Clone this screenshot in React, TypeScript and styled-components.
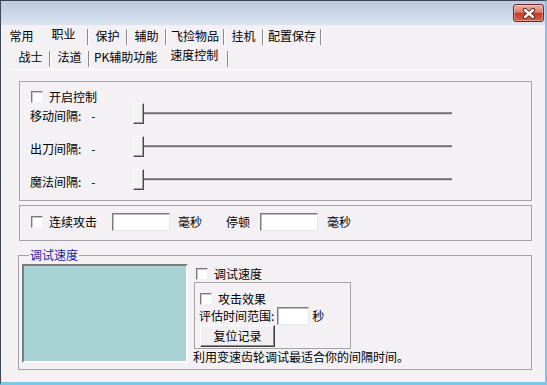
import * as React from 'react';
import styled, { createGlobalStyle } from 'styled-components';

const GlobalStyle = createGlobalStyle`
  html, body {
    margin: 0;
    padding: 0;
    background: #ffffff;
  }
  body {
    font-family: "Noto Sans CJK SC", "Noto Sans", sans-serif;
    font-size: 12px;
    line-height: 14px;
    color: #000;
  }
`;

const Window = styled.div`
  width: 547px;
  height: 385px;
  box-sizing: border-box;
  display: flex;
  flex-direction: column;
  border-top: 1px solid #3c4656;
  border-left: 1px solid #3c4656;
  border-right: 2px solid #7fc4ea;
  border-bottom: 3px solid #7fc4ea;
  background: #f4f1f5;
  overflow: hidden;
`;

const TitleBar = styled.div`
  height: 24px;
  flex-shrink: 0;
  display: flex;
  justify-content: flex-end;
  align-items: flex-start;
  padding: 3px 1px 0 0;
  box-sizing: border-box;
  background: linear-gradient(#bccbdf, #cfdbea 70%, #dbe4f0);
`;

const CloseButton = styled.div`
  width: 31px;
  height: 18px;
  box-sizing: border-box;
  border: 1px solid #6b2a22;
  border-radius: 3px;
  display: flex;
  align-items: center;
  justify-content: center;
  background: linear-gradient(#eab0a2 0%, #dc7e6a 45%, #c43c28 52%, #d2604c 100%);
  box-shadow: inset 0 0 0 1px rgba(255, 255, 255, 0.35);
`;

const Client = styled.div`
  flex: 1;
  display: flex;
  flex-direction: column;
  border-top: 1px solid #f0f0f4;
`;

const TabRow = styled.div<{ $indent: number; $h: number }>`
  display: flex;
  align-items: flex-end;
  height: ${(p) => p.$h}px;
  padding-left: ${(p) => p.$indent}px;
  flex-shrink: 0;
`;

const Tab = styled.div<{ $active?: boolean }>`
  height: 100%;
  box-sizing: border-box;
  display: flex;
  align-items: center;
  justify-content: center;
  white-space: nowrap;
  min-width: ${(p) => (p.$active ? 47 : 37)}px;
  padding: ${(p) => (p.$active ? '0 9px 4px' : '0 4px')};
`;

const TabSep = styled.div`
  width: 2px;
  height: 16px;
  box-sizing: border-box;
  border-left: 1px solid #8a8a8a;
  border-right: 1px solid #ffffff;
  margin-bottom: 1px;
  flex-shrink: 0;
`;

const Panel = styled.div`
  flex: 1;
  margin: 1px 32px 0 9px;
  border-top: 1px solid #ffffff;
  padding-top: 11px;
  display: flex;
  flex-direction: column;
`;

const Group = styled.div<{ $pt: number; $pb: number; $mt?: number }>`
  width: 513px;
  box-sizing: border-box;
  margin-left: 9px;
  margin-top: ${(p) => p.$mt || 0}px;
  border: 1px solid #a6a3a8;
  padding: ${(p) => p.$pt}px 0 ${(p) => p.$pb}px 0;
  display: flex;
  flex-direction: column;
`;

const CheckRow = styled.label<{ $ml?: number }>`
  display: flex;
  align-items: center;
  height: 13px;
  margin-left: ${(p) => p.$ml || 0}px;
  gap: 6px;
  white-space: nowrap;
`;

const CheckBox = styled.span`
  width: 12px;
  height: 12px;
  box-sizing: border-box;
  flex-shrink: 0;
  background: #ffffff;
  border-style: solid;
  border-width: 1px;
  border-color: #7a7a7a #f2f2f2 #f2f2f2 #7a7a7a;
  box-shadow: inset 1px 1px 0 #c8c8c8;
`;

const SliderRow = styled.div<{ $mt?: number }>`
  display: flex;
  align-items: center;
  height: 21px;
  margin-top: ${(p) => p.$mt || 0}px;
  padding-left: 10px;
`;

const SliderLabel = styled.div`
  width: 103px;
  display: flex;
  padding-top: 4px;
  white-space: nowrap;
`;

const Dash = styled.span`
  margin-left: 10px;
`;

const Slider = styled.div`
  display: flex;
  align-items: center;
  height: 21px;
`;

const Thumb = styled.div`
  width: 11px;
  height: 21px;
  box-sizing: border-box;
  background: #f4f3f4;
  border-style: solid;
  border-width: 1px;
  border-color: #ffffff #4a4a4a #4a4a4a #ffffff;
  box-shadow: inset -1px -1px 0 #a0a0a0;
`;

const Track = styled.div`
  width: 308px;
  height: 3px;
  box-sizing: border-box;
  background: #6c6c6c;
  border-top: 1px solid #8e8e8e;
  border-bottom: 1px solid #d8d8d8;
`;

const InlineRow = styled.div`
  display: flex;
  align-items: center;
  height: 18px;
  padding-left: 11px;
  white-space: nowrap;
`;

const Text = styled.span<{ $ml?: number }>`
  margin-left: ${(p) => p.$ml || 0}px;
  white-space: nowrap;
`;

const Input = styled.div<{ $w: number; $ml?: number }>`
  width: ${(p) => p.$w}px;
  height: 18px;
  box-sizing: border-box;
  margin-left: ${(p) => p.$ml || 0}px;
  background: #ffffff;
  border-style: solid;
  border-width: 1px;
  border-color: #7d7d7d #e6e6e6 #e6e6e6 #7d7d7d;
  box-shadow: inset 1px 1px 0 #bdbdbd;
  flex-shrink: 0;
`;

const FieldSet = styled.fieldset`
  width: 514px;
  height: 122px;
  box-sizing: border-box;
  margin: 7px 0 0 8px;
  padding: 0 0 5px 3px;
  border: 1px solid #a6a3a8;
  display: flex;
  min-width: 0;
`;

const Legend = styled.legend`
  margin-left: 7px;
  padding: 0 1px;
  color: #1a1aa6;
  line-height: 14px;
`;

const DebugCanvas = styled.div`
  width: 166px;
  height: 99px;
  margin-top: 2px;
  box-sizing: border-box;
  background: #a8d3d4;
  border-style: solid;
  border-width: 2px;
  border-color: #7c7c7c #fbfbfb #fbfbfb #7c7c7c;
  flex-shrink: 0;
`;

const SideColumn = styled.div`
  display: flex;
  flex-direction: column;
  margin-left: 5px;
  padding-top: 5px;
`;

const InnerBox = styled.div`
  width: 157px;
  height: 67px;
  box-sizing: border-box;
  margin: 2px 0 0 1px;
  border: 1px solid #a6a3a8;
  padding: 9px 0 0 5px;
  display: flex;
  flex-direction: column;
`;

const RangeRow = styled.div`
  display: flex;
  align-items: center;
  height: 18px;
  margin-top: 2px;
  margin-left: -1px;
  white-space: nowrap;
`;

const PushButton = styled.div`
  width: 75px;
  height: 22px;
  box-sizing: border-box;
  display: flex;
  align-items: center;
  justify-content: center;
  background: #f1eff1;
  border-style: solid;
  border-width: 1px;
  border-color: #ffffff #404040 #404040 #ffffff;
  box-shadow: inset -1px -1px 0 #8c8c8c;
`;

const HintText = styled.div`
  white-space: nowrap;
  margin-top: 1px;
`;

type TabItem = { label: string; active?: boolean; sep?: boolean };

const mainTabs: TabItem[] = [
  { label: '常用' },
  { label: '职业', active: true, sep: true },
  { label: '保护', sep: true },
  { label: '辅助', sep: true },
  { label: '飞捡物品', sep: true },
  { label: '挂机', sep: true },
  { label: '配置保存', sep: true },
];

const subTabs: TabItem[] = [
  { label: '战士', sep: true },
  { label: '法道', sep: true },
  { label: 'PK辅助功能' },
  { label: '速度控制', active: true, sep: true },
];

const sliders = ['移动间隔:', '出刀间隔:', '魔法间隔:'];

const renderTabs = (tabs: TabItem[]) =>
  tabs.map((t) => (
    <React.Fragment key={t.label}>
      <Tab $active={t.active}>{t.label}</Tab>
      {t.sep && <TabSep />}
    </React.Fragment>
  ));

export default function App() {
  return (
    <>
      <GlobalStyle />
      <Window>
        <TitleBar>
          <CloseButton>
            <svg width="14" height="11" viewBox="0 0 14 11">
              <path d="M3 2 L11 9 M11 2 L3 9" stroke="#5a1e16" strokeWidth="4.2" strokeLinecap="round" />
              <path d="M3 2 L11 9 M11 2 L3 9" stroke="#ffffff" strokeWidth="2.4" strokeLinecap="round" />
            </svg>
          </CloseButton>
        </TitleBar>
        <Client>
          <TabRow $indent={2} $h={20}>{renderTabs(mainTabs)}</TabRow>
          <TabRow $indent={11} $h={22}>{renderTabs(subTabs)}</TabRow>
          <Panel>
            <Group $pt={8} $pb={10}>
              <CheckRow $ml={11}>
                <CheckBox />
                开启控制
              </CheckRow>
              {sliders.map((label, i) => (
                <SliderRow key={label} $mt={i === 0 ? 0 : 12}>
                  <SliderLabel>
                    {label}
                    <Dash>-</Dash>
                  </SliderLabel>
                  <Slider>
                    <Thumb />
                    <Track />
                  </Slider>
                </SliderRow>
              ))}
            </Group>
            <Group $pt={7} $pb={9} $mt={4}>
              <InlineRow>
                <CheckRow>
                  <CheckBox />
                  连续攻击
                </CheckRow>
                <Input $w={58} $ml={15} />
                <Text $ml={8}>毫秒</Text>
                <Text $ml={24}>停顿</Text>
                <Input $w={58} $ml={10} />
                <Text $ml={9}>毫秒</Text>
              </InlineRow>
            </Group>
            <FieldSet>
              <Legend>调试速度</Legend>
              <DebugCanvas />
              <SideColumn>
                <CheckRow $ml={3}>
                  <CheckBox />
                  调试速度
                </CheckRow>
                <InnerBox>
                  <CheckRow>
                    <CheckBox />
                    攻击效果
                  </CheckRow>
                  <RangeRow>
                    评估时间范围:
                    <Input $w={32} $ml={3} />
                    <Text $ml={3}>秒</Text>
                  </RangeRow>
                  <PushButton>复位记录</PushButton>
                </InnerBox>
                <HintText>利用变速齿轮调试最适合你的间隔时间。</HintText>
              </SideColumn>
            </FieldSet>
          </Panel>
        </Client>
      </Window>
    </>
  );
}
